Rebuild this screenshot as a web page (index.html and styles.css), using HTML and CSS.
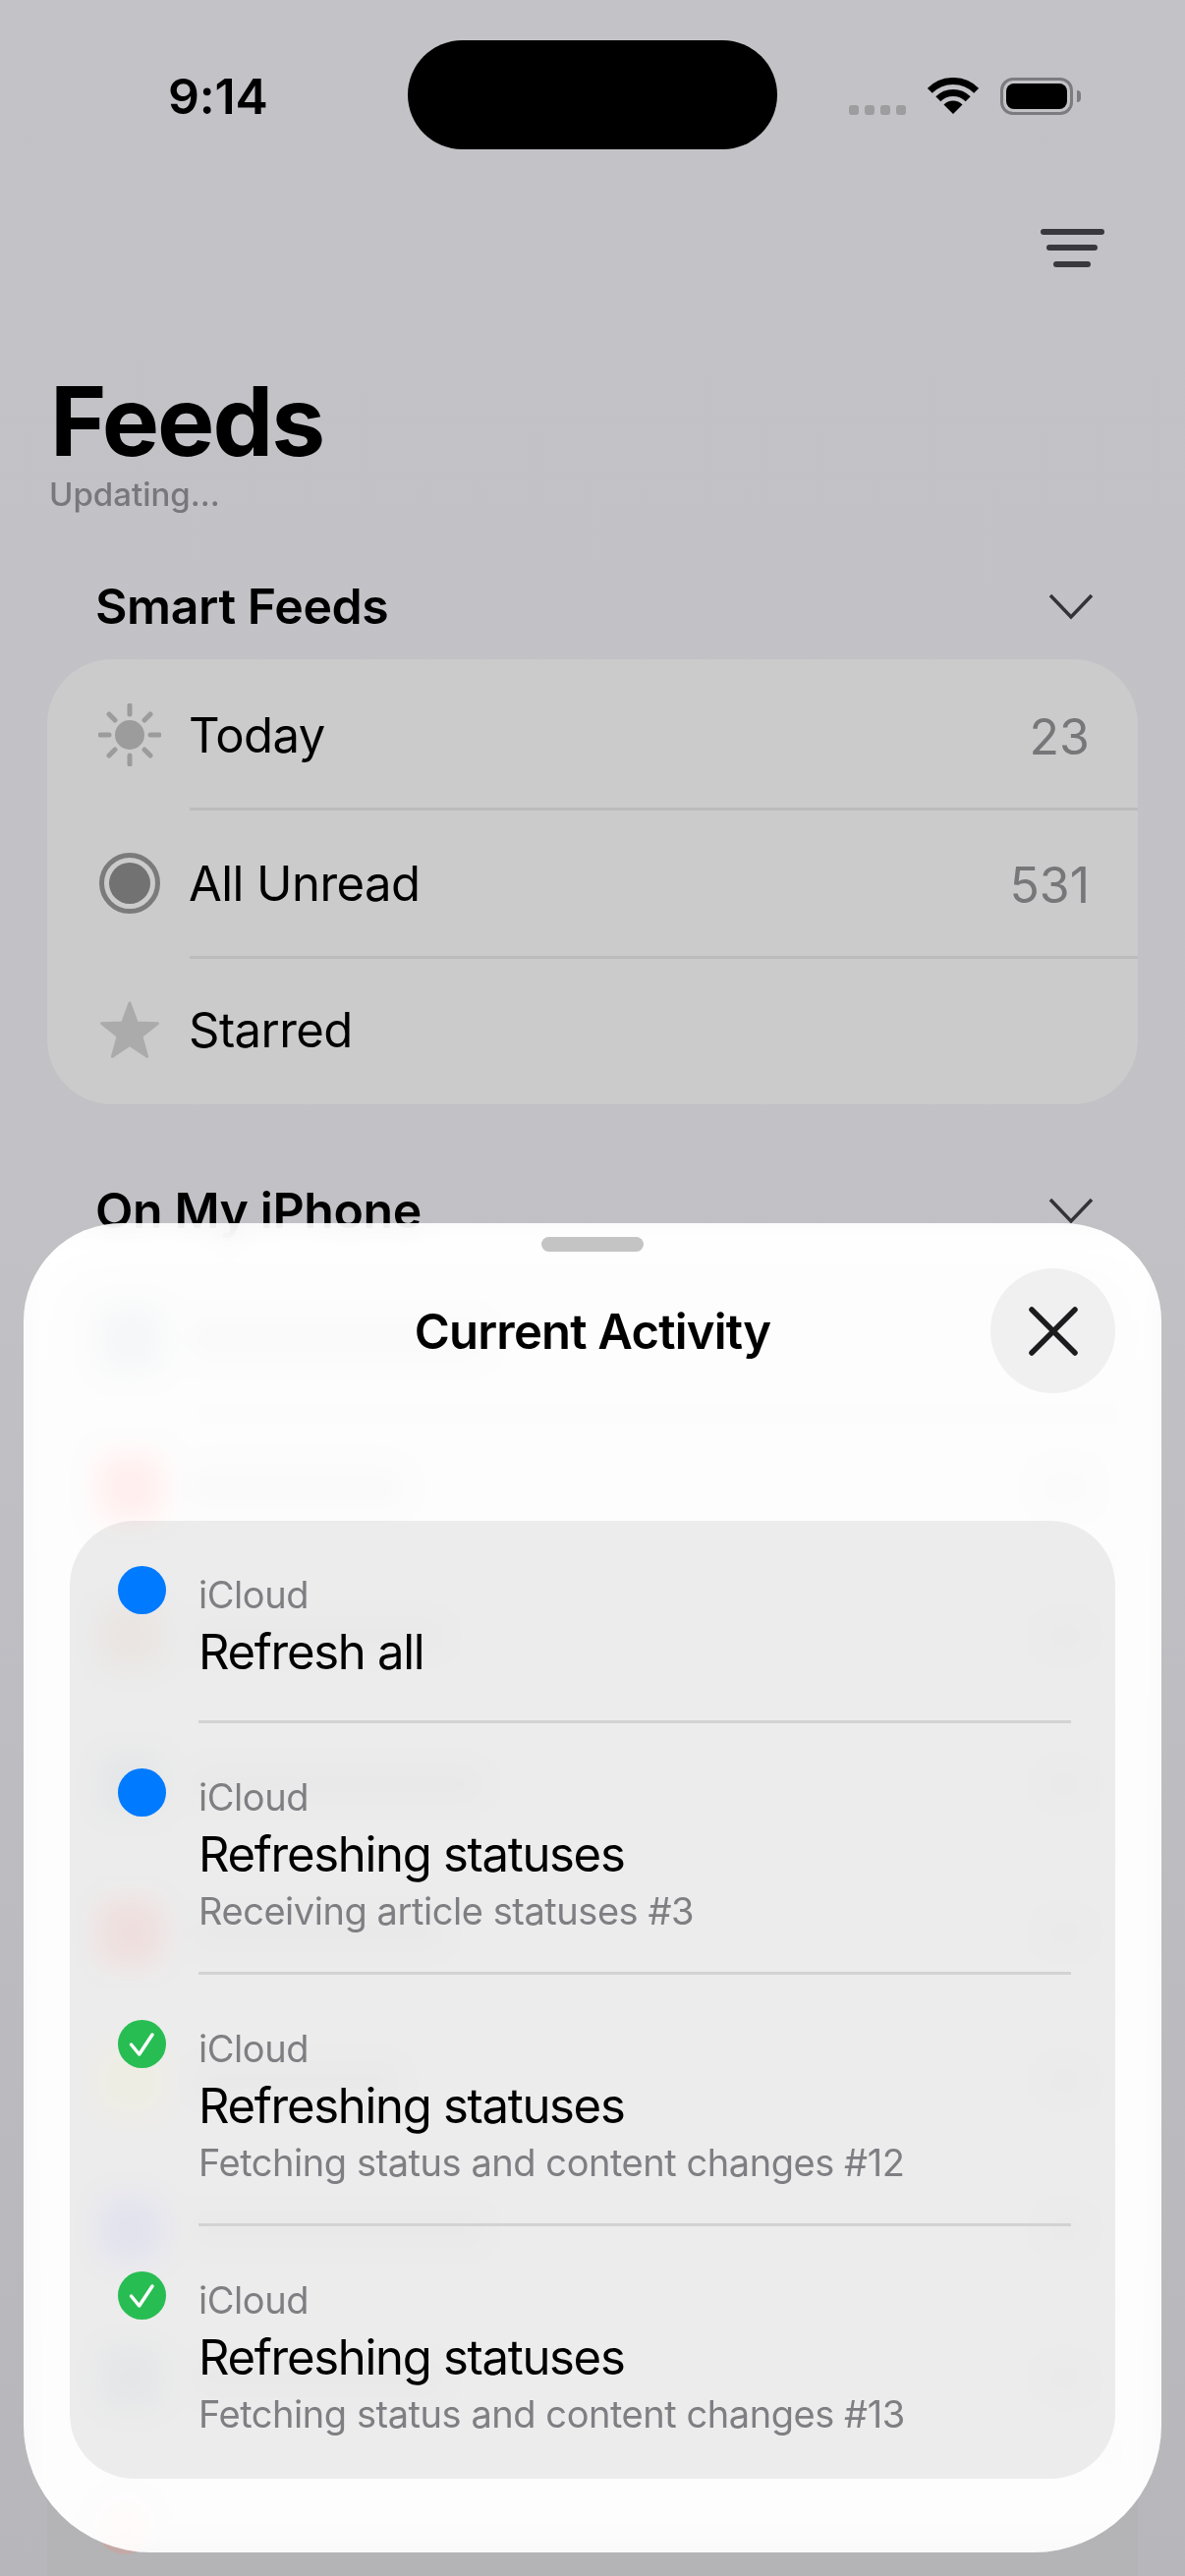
FILE: index.html
```html
<!DOCTYPE html>
<html lang="en">
<head>
  <meta charset="UTF-8" />
  <title>Feeds</title>
  <link rel="stylesheet" href="styles.css">
</head>
<body>
  <div class="screen">
    <div class="status">
      <div class="time">9:14</div>
      <div class="status-icons">
        <div class="signal"><i></i><i></i><i></i><i></i></div>
        <svg class="wifi" width="52" height="38" viewBox="0 0 52 38">
          <path d="M2.3 13.3A33.5 33.5 0 0 1 49.7 13.3" fill="none" stroke="#000" stroke-width="7"/>
          <path d="M10.8 21.8A21.5 21.5 0 0 1 41.2 21.8" fill="none" stroke="#000" stroke-width="7"/>
          <path d="M26 37L16.5 27.5A13.4 13.4 0 0 1 35.5 27.5Z" fill="#000"/>
        </svg>
        <div class="battery"><div class="battery-fill"></div></div>
        <div class="battery-cap"></div>
      </div>
    </div>
    <div class="island"></div>

    <div class="toolbar">
      <div class="filter-btn"><i></i><i></i><i></i></div>
    </div>

    <h1 class="page-title">Feeds</h1>
    <div class="page-sub">Updating...</div>

    <div class="section-head first">
      <span>Smart Feeds</span>
      <svg width="46" height="28" viewBox="0 0 46 28"><path d="M2 3L23 25L44 3" fill="none" stroke="#333338" stroke-width="3.5"/></svg>
    </div>
    <div class="card">
      <div class="row">
        <svg class="row-icon" width="64" height="64" viewBox="0 0 64 64">
          <circle cx="32" cy="32" r="15" fill="#9c9c9c"/>
          <path d="M32 2V11M32 53V62M2 32H11M53 32H62M11 11L17 17M47 47L53 53M53 11L47 17M17 47L11 53" stroke="#9c9c9c" stroke-width="5" stroke-linecap="round"/>
        </svg>
        <span class="row-text">Today</span>
        <span class="row-count">23</span>
      </div>
      <div class="row">
        <svg class="row-icon" width="64" height="64" viewBox="0 0 64 64">
          <circle cx="32" cy="32" r="28.5" fill="none" stroke="#7b7b7b" stroke-width="5"/>
          <circle cx="32" cy="32" r="21" fill="#727272"/>
        </svg>
        <span class="row-text">All Unread</span>
        <span class="row-count">531</span>
      </div>
      <div class="row">
        <svg class="row-icon" width="64" height="64" viewBox="0 0 64 64">
          <polygon points="32,4 39.3,23.9 60.5,24.7 43.9,37.9 49.6,58.3 32,46.5 14.4,58.3 20.1,37.9 3.5,24.7 24.7,23.9" fill="#ababab" stroke="#ababab" stroke-width="3" stroke-linejoin="round"/>
        </svg>
        <span class="row-text">Starred</span>
      </div>
    </div>

    <div class="section-head">
      <span>On My iPhone</span>
      <svg width="46" height="28" viewBox="0 0 46 28"><path d="M2 3L23 25L44 3" fill="none" stroke="#333338" stroke-width="3.5"/></svg>
    </div>
    <!-- only seen through the sheet's blur, so the labels are plain bars -->
    <div class="card behind">
      <div class="row"><div class="feed-icon slate"></div><div class="feed-bar w1"></div></div>
      <div class="row"><div class="feed-icon red"></div><div class="feed-bar w2"></div><div class="feed-num"></div></div>
      <div class="row"><div class="feed-icon brown"></div><div class="feed-bar w3"></div><div class="feed-num"></div></div>
      <div class="row"><div class="feed-icon slate"></div><div class="feed-bar w1"></div><div class="feed-num"></div></div>
      <div class="row"><div class="feed-icon red"></div><div class="feed-bar w3"></div><div class="feed-num"></div></div>
      <div class="row"><div class="feed-icon amber"></div><div class="feed-bar w2"></div><div class="feed-num"></div></div>
      <div class="row"><div class="feed-icon indigo"></div><div class="feed-bar w1"></div><div class="feed-num"></div></div>
      <div class="row"><div class="feed-icon slate"></div><div class="feed-bar w3"></div><div class="feed-num"></div></div>
      <div class="row"><div class="feed-icon pink"></div></div>
    </div>

    <div class="sheet">
      <div class="grabber"></div>
      <div class="sheet-head">
        <div></div>
        <div class="sheet-title">Current Activity</div>
        <div class="close-btn">
          <svg width="50" height="50" viewBox="0 0 50 50"><path d="M3 3L47 47M47 3L3 47" stroke="#1c1c1e" stroke-width="5.5" stroke-linecap="round"/></svg>
        </div>
      </div>
      <div class="activity">
        <div class="activity-row">
          <div class="dot blue"></div>
          <div class="activity-text">
            <div class="activity-src">iCloud</div>
            <div class="activity-title">Refresh all</div>
          </div>
        </div>
        <div class="activity-row">
          <div class="dot blue"></div>
          <div class="activity-text">
            <div class="activity-src">iCloud</div>
            <div class="activity-title">Refreshing statuses</div>
            <div class="activity-sub">Receiving article statuses #3</div>
          </div>
        </div>
        <div class="activity-row">
          <div class="dot green">
            <svg width="49" height="49" viewBox="0 0 49 49"><path d="M13.5 25L21.7 35L35 15" fill="none" stroke="#fff" stroke-width="3.5" stroke-linecap="round" stroke-linejoin="round"/></svg>
          </div>
          <div class="activity-text">
            <div class="activity-src">iCloud</div>
            <div class="activity-title">Refreshing statuses</div>
            <div class="activity-sub">Fetching status and content changes #12</div>
          </div>
        </div>
        <div class="activity-row">
          <div class="dot green">
            <svg width="49" height="49" viewBox="0 0 49 49"><path d="M13.5 25L21.7 35L35 15" fill="none" stroke="#fff" stroke-width="3.5" stroke-linecap="round" stroke-linejoin="round"/></svg>
          </div>
          <div class="activity-text">
            <div class="activity-src">iCloud</div>
            <div class="activity-title">Refreshing statuses</div>
            <div class="activity-sub">Fetching status and content changes #13</div>
          </div>
        </div>
      </div>
    </div>
  </div>
</body>
</html>
```

FILE: styles.css
```css
* {
  box-sizing: border-box;
}

body {
  margin: 0;
  font-family: Inter, 'Noto Sans', sans-serif;
  color: #000;
  background: #c1c1c6;
}

.screen {
  position: relative;
  width: 1206px;
  height: 2622px;
  overflow: hidden;
  background: linear-gradient(#c2c2c7 0, #c1c1c6 1200px, #b7b7bb 2622px);
}

/* status bar */
.status {
  display: flex;
  align-items: center;
  justify-content: space-between;
  height: 187px;
  padding: 9px 106px 0 171px;
}

.time {
  font-size: 50px;
  font-weight: 600;
  letter-spacing: -0.2px;
}

.status-icons {
  display: flex;
  align-items: flex-end;
}

.signal {
  display: flex;
  gap: 6px;
  margin-right: 22px;
}

.signal i {
  width: 10px;
  height: 10px;
  border-radius: 3px;
  background: #9d9da0;
}

.wifi {
  margin-right: 22px;
}

.battery {
  width: 74px;
  height: 38px;
  padding: 3px;
  border: 3.5px solid #7c7c80;
  border-radius: 13px;
}

.battery-fill {
  height: 100%;
  border-radius: 8px;
  background: #000;
}

.battery-cap {
  width: 4px;
  height: 12px;
  margin: 0 0 13px 4px;
  border-radius: 0 4px 4px 0;
  background: #7c7c80;
}

.island {
  position: absolute;
  top: 41px;
  left: 415px;
  width: 376px;
  height: 111px;
  border-radius: 56px;
  background: #000;
}

.toolbar {
  display: flex;
  justify-content: flex-end;
  padding-right: 50px;
}

.filter-btn {
  display: flex;
  flex-direction: column;
  align-items: center;
  justify-content: center;
  gap: 10.5px;
  width: 130px;
  height: 130px;
  border-radius: 50%;
  background: #c3c3c7;
}

.filter-btn i {
  height: 6px;
  border-radius: 3px;
  background: #38383d;
}

.filter-btn i:nth-child(1) { width: 65px; }
.filter-btn i:nth-child(2) { width: 52px; }
.filter-btn i:nth-child(3) { width: 38px; }

.page-title {
  margin: 63px 0 0 51px;
  font-size: 98px;
  line-height: 98px;
  font-weight: 700;
  letter-spacing: -2px;
}

.page-sub {
  margin: 5px 0 0 50px;
  font-size: 33px;
  line-height: 40px;
  font-weight: 500;
  color: #77777c;
}

.section-head {
  display: flex;
  align-items: center;
  justify-content: space-between;
  height: 60px;
  margin: 78px 93px 24px 97px;
  padding-bottom: 1px;
  font-size: 50px;
  font-weight: 600;
  letter-spacing: -0.4px;
}

.section-head.first {
  margin-top: 64px;
}

.card {
  margin: 0 48px;
  padding-top: 3px;
  border-radius: 66px;
  background: #cbcbcb;
}

.row {
  position: relative;
  display: flex;
  align-items: center;
  height: 151px;
  padding: 0 49px 3px 52px;
  font-size: 49px;
  letter-spacing: -0.55px;
}

.row::after {
  content: "";
  position: absolute;
  left: 145px;
  right: 0;
  bottom: 0;
  height: 3px;
  background: #bcbcbc;
}

.row:last-child {
  height: 148px;
}

.row:last-child::after {
  display: none;
}

.row-icon {
  flex: none;
}

.row-text {
  margin-left: 28px;
}

.row-count {
  margin: 3px 0 0 auto;
  font-size: 50px;
  letter-spacing: 0;
  color: #77777a;
}

/* the list under the sheet */
.card.behind {
  background: #b4b4b6;
  height: 1400px;
}

.card.behind .row::after {
  background: #acacae;
}

.feed-icon {
  width: 66px;
  height: 66px;
  border-radius: 16px;
}

.feed-icon.slate { background: #8a9298; }
.feed-icon.red { background: #e8655d; }
.feed-icon.brown { background: #a58a78; }
.feed-icon.amber { background: #d6bd7c; }
.feed-icon.indigo { background: #7c7cd6; }

.feed-icon.pink {
  width: 60px;
  height: 60px;
  margin-left: -3px;
  border-radius: 50%;
  background: #c3aaa7;
}

.feed-bar {
  height: 34px;
  margin-left: 27px;
  border-radius: 8px;
  background: #a0a0a3;
}

.feed-bar.w1 { width: 300px; }
.feed-bar.w2 { width: 215px; }
.feed-bar.w3 { width: 260px; }

.feed-num {
  width: 50px;
  height: 34px;
  margin-left: auto;
  border-radius: 8px;
  background: #a6a6a9;
}

/* sheet */
.sheet {
  position: absolute;
  top: 1245px;
  left: 24px;
  width: 1158px;
  height: 1353px;
  padding: 14px 47px 0;
  border-radius: 100px 100px 130px 130px;
  background: rgba(255, 255, 255, 0.87);
  backdrop-filter: blur(14px) brightness(1.3);
}

.grabber {
  width: 104px;
  height: 15px;
  margin: 0 auto;
  border-radius: 8px;
  background: #c4c4c4;
}

.sheet-head {
  display: grid;
  grid-template-columns: 1fr auto 1fr;
  align-items: center;
  margin-top: 17px;
}

.sheet-title {
  margin-top: 2px;
  font-size: 49px;
  font-weight: 600;
  letter-spacing: -0.8px;
}

.close-btn {
  display: flex;
  align-items: center;
  justify-content: center;
  justify-self: end;
  width: 127px;
  height: 127px;
  border-radius: 50%;
  background: #f0f0f0;
}

.activity {
  height: 975px;
  margin-top: 130px;
  border-radius: 66px;
  background: rgba(0, 0, 0, 0.065);
  overflow: hidden;
}

.activity-row {
  display: flex;
  padding: 0 45px 0 49px;
}

.dot {
  flex: none;
  width: 49px;
  height: 49px;
  margin: 46px 33px 0 0;
  border-radius: 50%;
}

.dot.blue { background: #007aff; }
.dot.green { background: #28bd53; }

.dot svg {
  display: block;
}

.activity-text {
  flex: 1;
  padding: 52px 0 39px;
  border-bottom: 3px solid #d3d3d3;
}

.activity-row:last-child .activity-text {
  border-bottom: none;
}

.activity-src {
  font-size: 38px;
  line-height: 46px;
  letter-spacing: -0.45px;
  color: #7f7f83;
}

.activity-title {
  margin-top: 6px;
  font-size: 49px;
  line-height: 60px;
  letter-spacing: -1.3px;
}

.activity-sub {
  margin-top: 4px;
  font-size: 38px;
  line-height: 46px;
  letter-spacing: -0.45px;
  color: #7f7f83;
}
```
